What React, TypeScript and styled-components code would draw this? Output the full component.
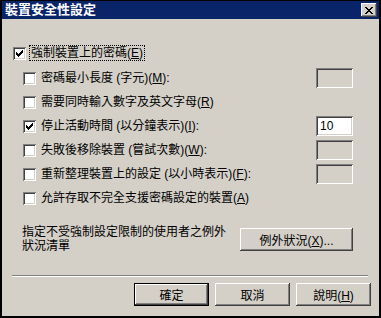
import React from "react";
import styled, { createGlobalStyle } from "styled-components";

const GlobalStyle = createGlobalStyle`
  html, body {
    margin: 0;
    padding: 0;
    background: #d4d0c8;
  }
  * {
    box-sizing: border-box;
  }
`;

const FONT = `"Liberation Sans", "Noto Sans CJK TC", sans-serif`;

const Window = styled.div`
  width: 381px;
  height: 318px;
  border: 2px solid #000;
  border-top-width: 1px;
  background: #d4d0c8;
  font-family: ${FONT};
  font-size: 12px;
  color: #000;
  display: flex;
  flex-direction: column;
`;

const TitleBar = styled.div`
  height: 18px;
  background: #0a246a;
  display: flex;
  align-items: center;
  justify-content: space-between;
  padding: 0 2px 0 3px;
`;

const Title = styled.span`
  color: #fff;
  font-weight: bold;
  font-size: 13px;
  line-height: 18px;
`;

const CloseButton = styled.button`
  width: 16px;
  height: 14px;
  padding: 0;
  margin: 0;
  border: none;
  background: #d4d0c8;
  box-shadow: inset -1px -1px #404040, inset 1px 1px #fff,
    inset -2px -2px #808080, inset 2px 2px #d4d0c8;
  display: flex;
  align-items: center;
  justify-content: center;
`;

const Body = styled.div`
  display: flex;
  flex-direction: column;
`;

const MainRow = styled.div`
  height: 24px;
  margin-top: 22px;
  padding-left: 11px;
  display: flex;
  align-items: center;
`;

const Box = styled.span`
  width: 13px;
  height: 13px;
  flex: none;
  background: #fff;
  box-shadow: inset 1px 1px #808080, inset -1px -1px #fff,
    inset 2px 2px #404040, inset -2px -2px #d4d0c8;
  display: flex;
  align-items: center;
  justify-content: center;
`;

const FocusLabel = styled.span`
  margin-left: 3px;
  padding: 0 1px;
  border: 1px dotted #000;
  line-height: 14px;
  white-space: nowrap;
`;

const SubList = styled.div`
  margin-top: 1px;
  padding: 0 26px 0 21px;
  display: flex;
  flex-direction: column;
`;

const Row = styled.div`
  height: 24px;
  display: flex;
  align-items: center;
`;

const Label = styled.span`
  margin-left: 5px;
  line-height: 14px;
  white-space: nowrap;
  flex: 1;
`;

const EditBox = styled.span<{ $enabled?: boolean }>`
  width: 37px;
  height: 20px;
  flex: none;
  background: ${(p) => (p.$enabled ? "#fff" : "#d4d0c8")};
  box-shadow: inset 1px 1px #808080, inset -1px -1px #fff,
    inset 2px 2px #404040, inset -2px -2px #d4d0c8;
  padding: 3px 0 0 4px;
  line-height: 14px;
`;

const ExceptionBlock = styled.div`
  margin-top: 15px;
  padding: 0 26px 0 20px;
  display: flex;
  justify-content: space-between;
  align-items: flex-start;
`;

const ExceptionText = styled.div`
  width: 210px;
  line-height: 14px;
`;

const PushButton = styled.button<{ $default?: boolean; $width?: number; $top?: number }>`
  height: 23px;
  width: ${(p) => p.$width ?? 75}px;
  flex: none;
  margin: ${(p) => p.$top ?? 0}px 0 0 0;
  padding: 0;
  font-family: ${FONT};
  font-size: 12px;
  color: #000;
  background: #d4d0c8;
  border: ${(p) => (p.$default ? "1px solid #000" : "none")};
  box-shadow: inset -1px -1px #404040, inset 1px 1px #fff,
    inset -2px -2px #808080, inset 2px 2px #d4d0c8;
`;

const Separator = styled.div`
  margin: 22px 11px 0 10px;
  height: 2px;
  border-top: 1px solid #808080;
  border-bottom: 1px solid #fff;
`;

const ButtonRow = styled.div`
  margin-top: 6px;
  padding-right: 8px;
  display: flex;
  justify-content: flex-end;
  gap: 6px;
`;

const Check = () => (
  <svg width="7" height="7" viewBox="0 0 7 7" shapeRendering="crispEdges">
    <path
      d="M0 2h1v3h-1zM1 3h1v3h-1zM2 4h1v3h-1zM3 3h1v3h-1zM4 2h1v3h-1zM5 1h1v3h-1zM6 0h1v3h-1z"
      fill="#000"
    />
  </svg>
);

const CloseGlyph = () => (
  <svg width="8" height="7" viewBox="0 0 8 7" shapeRendering="crispEdges">
    <path
      d="M0 0h2v1h-2zM6 0h2v1h-2zM1 1h2v1h-2zM5 1h2v1h-2zM2 2h4v1h-4zM3 3h2v1h-2zM2 4h4v1h-4zM1 5h2v1h-2zM5 5h2v1h-2zM0 6h2v1h-2zM6 6h2v1h-2z"
      fill="#000"
    />
  </svg>
);

type Opt = {
  text: string;
  key: string;
  checked?: boolean;
  edit?: "off" | "on";
  value?: string;
};

const options: Opt[] = [
  { text: "密碼最小長度 (字元)", key: "M", edit: "off" },
  { text: "需要同時輸入數字及英文字母", key: "R" },
  { text: "停止活動時間 (以分鐘表示)", key: "I", checked: true, edit: "on", value: "10" },
  { text: "失敗後移除裝置 (嘗試次數)", key: "W", edit: "off" },
  { text: "重新整理裝置上的設定 (以小時表示)", key: "F", edit: "off" },
  { text: "允許存取不完全支援密碼設定的裝置", key: "A" },
];

export default function App() {
  return (
    <>
      <GlobalStyle />
      <Window>
        <TitleBar>
          <Title>裝置安全性設定</Title>
          <CloseButton>
            <CloseGlyph />
          </CloseButton>
        </TitleBar>
        <Body>
          <MainRow>
            <Box>
              <Check />
            </Box>
            <FocusLabel>
              強制裝置上的密碼(<u>E</u>)
            </FocusLabel>
          </MainRow>
          <SubList>
            {options.map((o) => (
              <Row key={o.key}>
                <Box>{o.checked && <Check />}</Box>
                <Label>
                  {o.text}(<u>{o.key}</u>){o.edit ? ":" : ""}
                </Label>
                {o.edit && (
                  <EditBox $enabled={o.edit === "on"}>{o.value}</EditBox>
                )}
              </Row>
            ))}
          </SubList>
          <ExceptionBlock>
            <ExceptionText>
              指定不受強制設定限制的使用者之例外
              <br />
              狀況清單
            </ExceptionText>
            <PushButton $width={113} $top={3}>
              例外狀況(<u>X</u>)...
            </PushButton>
          </ExceptionBlock>
          <Separator />
          <ButtonRow>
            <PushButton $default>確定</PushButton>
            <PushButton>取消</PushButton>
            <PushButton>
              說明(<u>H</u>)
            </PushButton>
          </ButtonRow>
        </Body>
      </Window>
    </>
  );
}
